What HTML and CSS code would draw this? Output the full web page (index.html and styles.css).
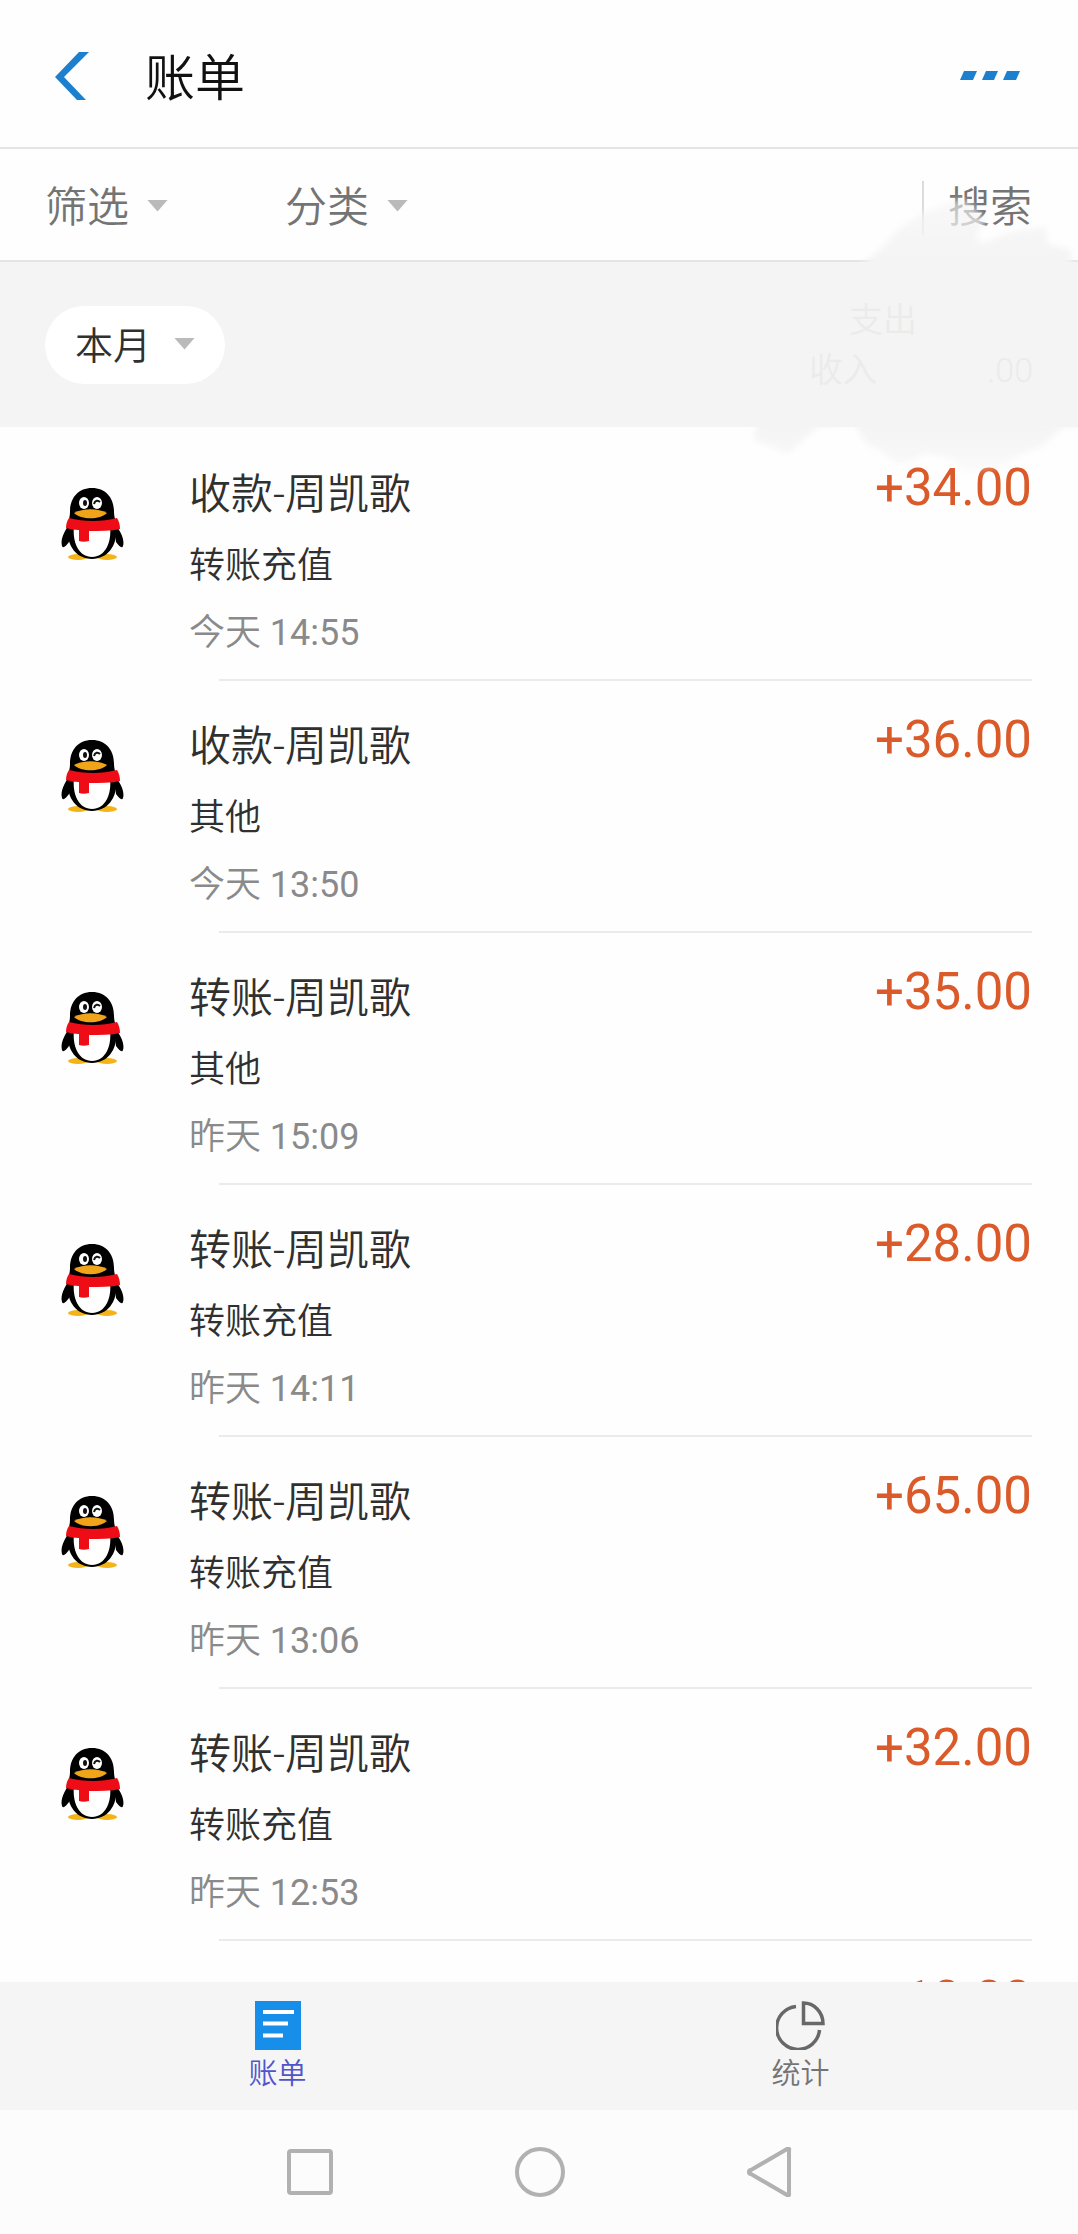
FILE: index.html
```html
<!DOCTYPE html>
<html lang="zh-CN">
<head>
<meta charset="utf-8">
<meta name="viewport" content="width=device-width, initial-scale=1">
<title>账单</title>
<link rel="stylesheet" href="styles.css">
</head>
<body>
<svg class="defs" aria-hidden="true">
  <symbol id="penguin" viewBox="0 0 64 74">
    <ellipse cx="17" cy="70" rx="10" ry="3" fill="#f5b31a"/>
    <ellipse cx="46" cy="70" rx="10" ry="3" fill="#f5b31a"/>
    <path d="M9 36C4 43-1 52 1 59c1 3 4 0 7-4zM53 36c6 7 11 16 9 23-1 3-4 0-7-4z" fill="#000"/>
    <path d="M31 1C17 1 9 11 9 25c0 4-1 7-2 11-3 19 6 36 24 36s27-17 24-36c-1-4-2-7-2-11C53 11 45 1 31 1z" fill="#000"/>
    <path d="M13 38c-2 18 5 32 18 32s20-14 18-32z" fill="#fff"/>
    <path d="M8 31c15 4 33 4 48 0 2 3 3 7 3 11-9 2-20 2-31 2v10c-4 1-7 1-10 0V43c-5 0-9-1-13-2 0-4 1-7 3-10z" fill="#ee0d16"/>
    <ellipse cx="23" cy="16" rx="5" ry="6" fill="#fff"/>
    <ellipse cx="36" cy="16" rx="5" ry="6" fill="#fff"/>
    <ellipse cx="24" cy="16" rx="2" ry="3" fill="#111"/>
    <path d="M33 17c1-4 4-4 6-2" fill="none" stroke="#111" stroke-width="2"/>
    <path d="M13 26c9-5 24-5 33 0-7 7-26 7-33 0z" fill="#f0a419"/>
  </symbol>
</svg>
<div class="screen">
  <header class="title-bar">
    <button class="icon-button" type="button" aria-label="返回">
      <svg width="34" height="48" viewBox="0 0 34 48"><path d="M34 0H24L0 25l22 23h9L9 25z" fill="#1c80cf"/></svg>
    </button>
    <h1 class="title">账单</h1>
    <button class="icon-button more" type="button" aria-label="更多">
      <svg width="60" height="9" viewBox="0 0 60 9"><path d="M4 0h13l-4 9H0zM26 0h12l-4 9H22zM47 0h13l-4 9H43z" fill="#1c80cf"/></svg>
    </button>
  </header>

  <div class="upper">
    <nav class="filter-bar">
      <span class="picker"><select class="picker-select" aria-label="筛选"><option>筛选</option></select></span>
      <span class="picker"><select class="picker-select" aria-label="分类"><option>分类</option></select></span>
      <button class="search" type="button">搜索</button>
    </nav>
    <section class="summary">
      <span class="picker month"><select class="picker-select" aria-label="月份"><option>本月</option></select></span>
      <div class="totals">
        <p class="total out">支出</p>
        <p class="total"><span>收入</span><span>.00</span></p>
      </div>
    </section>
    <svg class="smudge" width="338" height="290" viewBox="740 190 338 290" aria-hidden="true">
      <defs>
        <filter id="feather"><feGaussianBlur stdDeviation="3"/></filter>
        <linearGradient id="fade" gradientUnits="userSpaceOnUse" x1="0" y1="195" x2="0" y2="480">
          <stop offset="0" stop-color="#f4f4f4" stop-opacity=".5"/>
          <stop offset=".22" stop-color="#f4f4f4"/>
          <stop offset=".82" stop-color="#f4f4f4"/>
          <stop offset="1" stop-color="#f4f4f4" stop-opacity=".3"/>
        </linearGradient>
      </defs>
      <path filter="url(#feather)" fill="url(#fade)" d="M862 264L880 250L898 230L922 213L962 198L972 204L986 222L976 234L980 244L1012 232L1046 226L1048 244L1072 250L1070 264H1084V427H1063L1042 446L1014 458L1000 466L966 472L950 458L925 453L910 462L896 464L880 450L866 444L855 424L818 427L788 454L770 446L753 440L758 422L770 380L800 320Z"/>
    </svg>
  </div>

  <main class="list">
    <article class="entry"><svg class="avatar"><use href="#penguin"/></svg><div class="info"><h2 class="name">收款-周凯歌</h2><p class="kind">转账充值</p><time class="time">今天 <span class="clock">14:55</span></time></div><p class="amount">+34.00</p></article>
    <article class="entry"><svg class="avatar"><use href="#penguin"/></svg><div class="info"><h2 class="name">收款-周凯歌</h2><p class="kind">其他</p><time class="time">今天 <span class="clock">13:50</span></time></div><p class="amount">+36.00</p></article>
    <article class="entry"><svg class="avatar"><use href="#penguin"/></svg><div class="info"><h2 class="name">转账-周凯歌</h2><p class="kind">其他</p><time class="time">昨天 <span class="clock">15:09</span></time></div><p class="amount">+35.00</p></article>
    <article class="entry"><svg class="avatar"><use href="#penguin"/></svg><div class="info"><h2 class="name">转账-周凯歌</h2><p class="kind">转账充值</p><time class="time">昨天 <span class="clock">14:11</span></time></div><p class="amount">+28.00</p></article>
    <article class="entry"><svg class="avatar"><use href="#penguin"/></svg><div class="info"><h2 class="name">转账-周凯歌</h2><p class="kind">转账充值</p><time class="time">昨天 <span class="clock">13:06</span></time></div><p class="amount">+65.00</p></article>
    <article class="entry"><svg class="avatar"><use href="#penguin"/></svg><div class="info"><h2 class="name">转账-周凯歌</h2><p class="kind">转账充值</p><time class="time">昨天 <span class="clock">12:53</span></time></div><p class="amount">+32.00</p></article>
    <article class="entry"><p class="amount">+10.00</p></article>
  </main>

  <nav class="tabs">
    <a class="tab active" href="#bills">
      <svg width="46" height="49" viewBox="0 0 46 49"><path d="M0 0h46v49H0z" fill="#168eea"/><path d="M8 11h31M8 22.500h25M8 34.500h20" stroke="#fff" stroke-width="4"/></svg>
      账单
    </a>
    <a class="tab" href="#stats">
      <svg width="49" height="49" viewBox="0 0 49 49" fill="none" stroke="#686868" stroke-width="3.500"><path d="M20 5.500A21.500 21.500 0 1 0 43.500 29"/><path d="M27.500 2v20.500H47C47 11 38 2 27.500 2z"/></svg>
      统计
    </a>
  </nav>
  <nav class="system">
    <button class="icon-button" type="button" aria-label="最近任务"><svg width="50" height="50" viewBox="0 0 50 50"><rect x="4" y="4" width="42" height="42" rx="2"/></svg></button>
    <button class="icon-button" type="button" aria-label="主屏幕"><svg width="50" height="50" viewBox="0 0 50 50"><circle cx="25" cy="25" r="23"/></svg></button>
    <button class="icon-button" type="button" aria-label="后退"><svg width="50" height="50" viewBox="0 0 50 50"><path d="M44 3v44a1 1 0 0 1-2 1L6 27a2 2 0 0 1 0-4L42 2a1 1 0 0 1 2 1z"/></svg></button>
  </nav>
</div>
</body>
</html>
```
FILE: styles.css
```css
* { box-sizing: border-box; }
body, h1, h2, p { margin: 0; font-weight: 350; }
body {
  background: #fefefe;
  color: #303030;
  font-family: Roboto, "Noto Sans CJK SC", sans-serif;
}
button, select {
  appearance: none;
  padding: 0;
  border: 0;
  background: none;
  color: inherit;
  font: inherit;
}
svg { display: block; }
.defs { position: absolute; width: 0; height: 0; }

.screen { display: flex; flex-direction: column; height: 100vh; overflow: hidden; }

.title-bar {
  display: flex;
  align-items: center;
  flex: none;
  height: 149px;
  padding: 4px 58px 0 55px;
  border-bottom: 2px solid #e4e4e4;
}
.icon-button { display: flex; }
.title { margin-left: 56px; padding-top: 6px; color: #111; font-size: 50px; line-height: 60px; }
.more { margin-left: auto; }

.upper { position: relative; flex: none; }
.filter-bar {
  display: flex;
  align-items: center;
  gap: 117px;
  height: 113px;
  padding: 6px 46px 0 45px;
  border-bottom: 2px solid #e4e4e4;
  color: #747474;
  font-size: 42px;
}
.picker { display: flex; align-items: center; }
.picker-select { height: 60px; padding-right: 38px; line-height: 60px; }
.picker::after {
  content: "";
  width: 21px;
  height: 12px;
  margin: 0 0 4px -21px;
  background: #bababa;
  clip-path: polygon(0 0, 100% 0, 50% 100%);
  pointer-events: none;
}
.search { margin-left: auto; padding-left: 24px; border-left: 2px solid #dcdcdc; line-height: 54px; }

.summary {
  display: flex;
  align-items: center;
  justify-content: space-between;
  height: 165px;
  padding: 0 45px;
  background: #f4f4f4;
}
.month {
  height: 78px;
  padding: 2px 30px 0;
  border-radius: 39px;
  background: #fff;
  font-size: 38px;
}
.month .picker-select { padding-right: 43px; }
.totals { position: relative; z-index: 2; width: 224px; color: #ebebeb; font-size: 34px; line-height: 50px; }
.total { display: flex; justify-content: space-between; }
.out { padding-left: 40px; }
.smudge { position: absolute; z-index: 1; right: 0; top: 41px; pointer-events: none; }

.list { flex: 1; min-height: 0; padding-top: 2px; overflow: hidden; }
.entry { display: flex; align-items: flex-start; height: 252px; padding: 0 46px 0 61px; position: relative; }
.entry::after {
  content: "";
  position: absolute;
  left: 219px;
  right: 46px;
  bottom: 0;
  height: 2px;
  background: #ebebeb;
}
.avatar { width: 64px; height: 74px; margin-top: 58px; }
.info { display: flex; flex-direction: column; margin: 36px 0 0 64px; }
.name { font-size: 42px; line-height: 60px; }
.kind { margin-top: 16px; font-size: 36px; line-height: 50px; }
.time { margin-top: 17px; color: #8a8a8a; font-size: 36px; line-height: 50px; }
.clock, .amount { font-weight: 400; }
.amount { margin: 29px 0 0 auto; color: #db5a29; font-size: 51px; line-height: 60px; }

.tabs { display: flex; flex: none; height: 128px; padding: 0 16px; background: #f5f5f5; }
.tab {
  display: flex;
  flex-direction: column;
  align-items: center;
  gap: 4px;
  flex: 1;
  padding-top: 19px;
  color: #747474;
  font-size: 29px;
  line-height: 40px;
  text-decoration: none;
}
.active { color: #5054cc; }
.system {
  display: flex;
  flex: none;
  align-items: center;
  justify-content: center;
  gap: 180px;
  height: 124px;
  padding-left: 2px;
  background: #fcfcfc;
}
.system svg { fill: none; stroke: #b1b1b1; stroke-width: 4; }
```
